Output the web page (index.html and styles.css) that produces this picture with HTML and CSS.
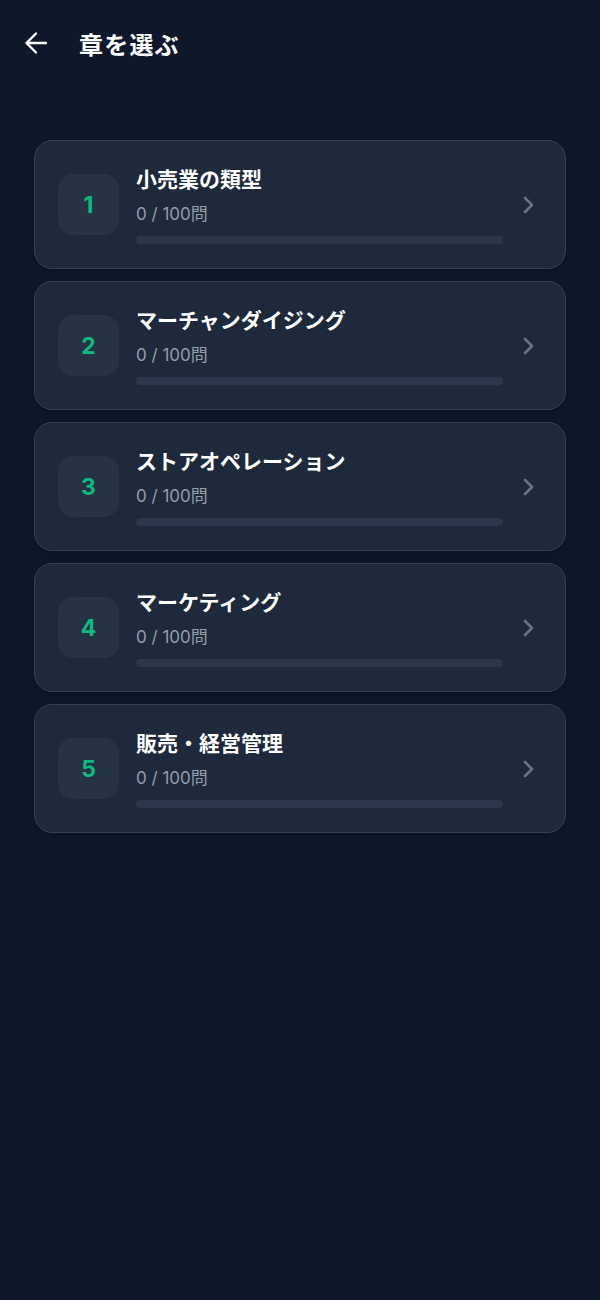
FILE: index.html
```html
<!DOCTYPE html>
<html lang="ja">
<head>
<meta charset="utf-8">
<title>章を選ぶ</title>
<link rel="stylesheet" href="styles.css">
</head>
<body>
<div class="app">
  <header class="header">
    <button class="back" aria-label="戻る">
      <svg width="24" height="24" viewBox="0 0 24 24" fill="none" stroke="#ffffff" stroke-width="2.4" stroke-linecap="round" stroke-linejoin="round"><path d="M22 12H3"/><path d="M12 2.5L2.5 12 12 21.5"/></svg>
    </button>
    <h1 class="title">章を選ぶ</h1>
  </header>
  <main class="list">
    <a class="card">
      <div class="num">1</div>
      <div class="info">
        <div class="name">小売業の類型</div>
        <div class="count">0 / 100問</div>
        <div class="bar"><div class="fill" style="width:0%"></div></div>
      </div>
      <svg class="chev" width="14" height="20" viewBox="0 0 14 20" fill="none" stroke="#64748b" stroke-width="2.6" stroke-linecap="round" stroke-linejoin="round"><path d="M4 3l7 7-7 7"/></svg>
    </a>
    <a class="card">
      <div class="num">2</div>
      <div class="info">
        <div class="name">マーチャンダイジング</div>
        <div class="count">0 / 100問</div>
        <div class="bar"><div class="fill" style="width:0%"></div></div>
      </div>
      <svg class="chev" width="14" height="20" viewBox="0 0 14 20" fill="none" stroke="#64748b" stroke-width="2.6" stroke-linecap="round" stroke-linejoin="round"><path d="M4 3l7 7-7 7"/></svg>
    </a>
    <a class="card">
      <div class="num">3</div>
      <div class="info">
        <div class="name">ストアオペレーション</div>
        <div class="count">0 / 100問</div>
        <div class="bar"><div class="fill" style="width:0%"></div></div>
      </div>
      <svg class="chev" width="14" height="20" viewBox="0 0 14 20" fill="none" stroke="#64748b" stroke-width="2.6" stroke-linecap="round" stroke-linejoin="round"><path d="M4 3l7 7-7 7"/></svg>
    </a>
    <a class="card">
      <div class="num">4</div>
      <div class="info">
        <div class="name">マーケティング</div>
        <div class="count">0 / 100問</div>
        <div class="bar"><div class="fill" style="width:0%"></div></div>
      </div>
      <svg class="chev" width="14" height="20" viewBox="0 0 14 20" fill="none" stroke="#64748b" stroke-width="2.6" stroke-linecap="round" stroke-linejoin="round"><path d="M4 3l7 7-7 7"/></svg>
    </a>
    <a class="card">
      <div class="num">5</div>
      <div class="info">
        <div class="name">販売・経営管理</div>
        <div class="count">0 / 100問</div>
        <div class="bar"><div class="fill" style="width:0%"></div></div>
      </div>
      <svg class="chev" width="14" height="20" viewBox="0 0 14 20" fill="none" stroke="#64748b" stroke-width="2.6" stroke-linecap="round" stroke-linejoin="round"><path d="M4 3l7 7-7 7"/></svg>
    </a>
  </main>
</div>
</body>
</html>
```
FILE: styles.css
```css
* { box-sizing: border-box; }
html, body {
  margin: 0;
  padding: 0;
  background: #0f172a;
}
body {
  font-family: Inter, "Noto Sans", "Noto Sans CJK JP", sans-serif;
  color: #ffffff;
  min-height: 1300px;
}
.app {
  width: 600px;
}
.header {
  display: flex;
  align-items: center;
  height: 88px;
  padding: 0 0 2px 24px;
  gap: 31px;
}
.back {
  background: none;
  border: 0;
  padding: 0;
  width: 24px;
  height: 24px;
  display: flex;
  align-items: center;
  justify-content: center;
  cursor: pointer;
}
.title {
  margin: 0;
  font-family: "Noto Sans CJK JP", sans-serif;
  font-weight: 700;
  font-size: 24px;
  letter-spacing: 1.2px;
  color: #ffffff;
}
.list {
  display: flex;
  flex-direction: column;
  gap: 12px;
  padding: 52px 34px 0 34px;
}
.card {
  display: flex;
  align-items: center;
  height: 129px;
  padding: 0 30px 0 23px;
  background: #1e293b;
  border: 1px solid #334155;
  border-radius: 18px;
  box-shadow: 0 2px 6px rgba(0,0,0,0.25);
}
.num {
  flex: none;
  width: 61px;
  height: 61px;
  border-radius: 15px;
  background: #263345;
  color: #10b981;
  display: flex;
  align-items: center;
  justify-content: center;
  font-family: Inter, "Noto Sans", sans-serif;
  font-weight: 700;
  font-size: 23px;
}
.info {
  flex: 1;
  margin-left: 17px;
  margin-right: 18px;
  display: flex;
  flex-direction: column;
}
.name {
  font-family: "Noto Sans CJK JP", sans-serif;
  font-weight: 700;
  font-size: 21px;
  line-height: 26px;
  color: #ffffff;
}
.count {
  margin-top: 12px;
  font-family: Inter, "Noto Sans CJK JP", sans-serif;
  font-size: 17px;
  line-height: 22px;
  color: #939dab;
}
.bar {
  margin-top: 11px;
  height: 8px;
  border-radius: 4px;
  background: #2b374a;
  overflow: hidden;
}
.fill {
  height: 100%;
  background: #10b981;
}
.chev {
  flex: none;
}
```
